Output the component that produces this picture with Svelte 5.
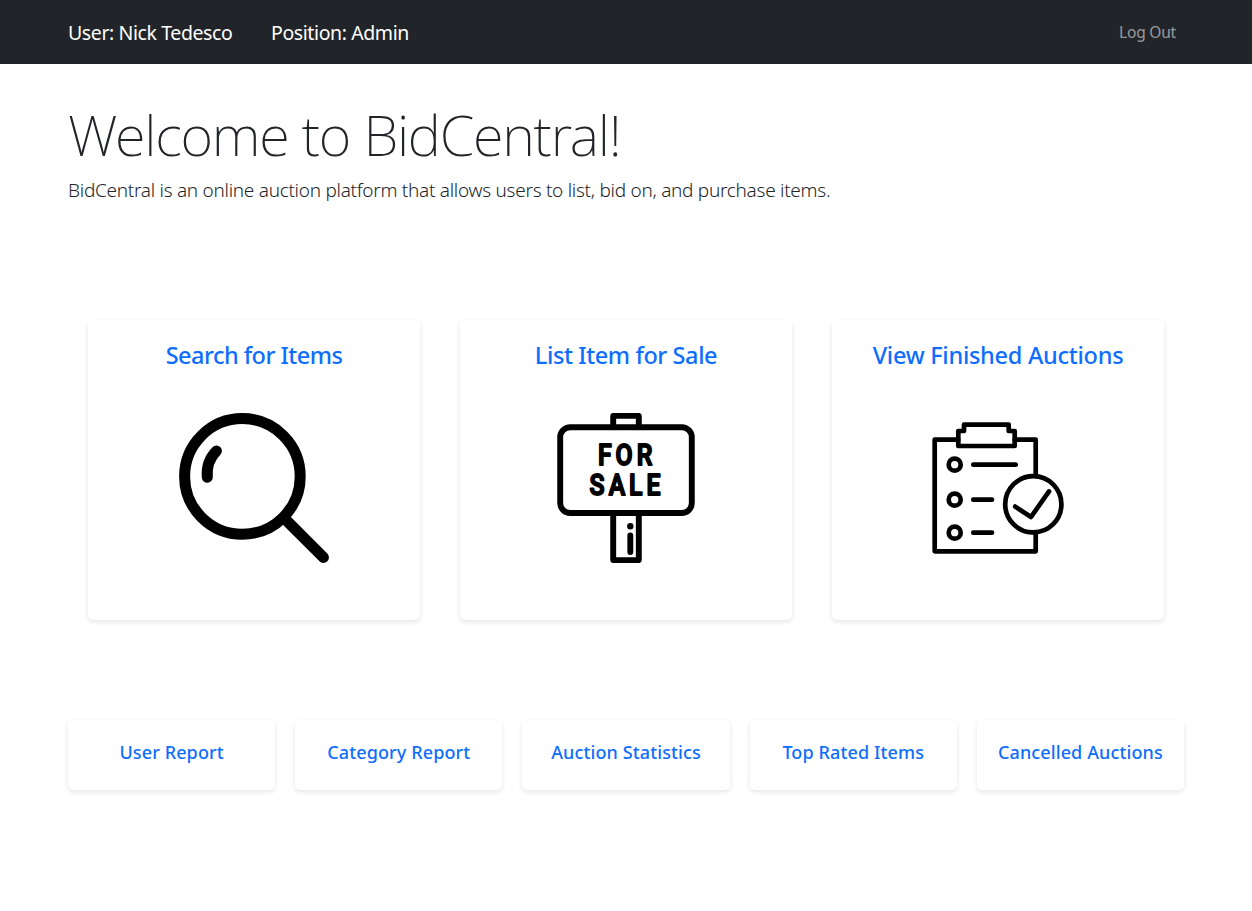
<script>
  const features = [
    { title: 'Search for Items', icon: 'search' },
    { title: 'List Item for Sale', icon: 'sale' },
    { title: 'View Finished Auctions', icon: 'finished' },
  ];
  const reports = ['User Report', 'Category Report', 'Auction Statistics', 'Top Rated Items', 'Cancelled Auctions'];
</script>

<nav>
  <span class="brand user">User: Nick Tedesco</span>
  <span class="brand position">Position: Admin</span>
  <a class="logout" href="#logout">Log Out</a>
</nav>

<main>
  <h1>Welcome to BidCentral!</h1>
  <p class="lead">BidCentral is an online auction platform that allows users to list, bid on, and purchase items.</p>

  <section class="features">
    {#each features as f}
      <a class="card {f.icon}" href="#{f.icon}">
        <h2>{f.title}</h2>
        <svg viewBox="0 0 150 150" width="150" height="150" fill="none" stroke="#000" stroke-linecap="round" stroke-linejoin="round">
          {#if f.icon === 'search'}
            <g stroke-width="11">
              <circle cx="63.4" cy="63.4" r="57.8" />
              <path d="M106 106L144.4 144.4" />
              <path d="M28.3 64.3C27.4 54 30.5 45 37.4 38" />
            </g>
          {:else if f.icon === 'sale'}
            <g stroke-width="5.9">
              <rect x="9.2" y="14.2" width="131.6" height="85.8" rx="10" />
              <path d="M62.2 14V2.9H87.8V14M62.2 100V147.1H87.8V100M79.3 122.4V139" />
            </g>
            <circle cx="79.3" cy="113.3" r="3.2" fill="#000" stroke="none" />
            <g class="sign" transform="scale(.86 1)">
              <text x="54.6" y="51.6">FOR</text>
              <text x="44.9" y="82.1">SALE</text>
            </g>
          {:else}
            <g stroke-width="4.7">
              <path d="M35.3 26.7H11.7V138.3H112.7V119.6M91.7 26.7H112.7V63" />
              <path d="M35.3 33V18H41V11.7H85.7V18H91.7V33Z" />
              <circle cx="31.7" cy="51.7" r="6" />
              <circle cx="31.7" cy="86.7" r="6" />
              <circle cx="31.7" cy="119.7" r="6" />
              <path d="M50.3 51.7H92.7M50.3 86.7H69M50.3 119.7H69" />
              <circle cx="110.3" cy="91.3" r="28.1" />
              <path d="M92.2 93.6L108 104L126 78.4" />
            </g>
          {/if}
        </svg>
      </a>
    {/each}
  </section>

  <section class="reports">
    {#each reports as title, i}
      <a class="card small" href="#report-{i}">{title}</a>
    {/each}
  </section>
</main>

<style>
  :global(body) {
    margin: 0;
    background: #fff;
    color: #212529;
    font-family: "Noto Sans", "Open Sans", sans-serif;
  }
  nav {
    box-sizing: border-box;
    height: 64px;
    padding: 2px 76px 0 68px;
    display: flex;
    align-items: center;
    background: #212529;
    line-height: 30px;
  }
  .brand { color: #fff; font-size: 19.5px; white-space: nowrap; letter-spacing: -0.4px; }
  .user { width: 203px; }
  .logout { margin: -2px 0 0 auto; color: rgba(255, 255, 255, 0.55); font-size: 15.5px; text-decoration: none; letter-spacing: -0.2px; }
  main { padding: 37px 68px 121px; }
  h1 {
    margin: 0;
    font-size: 56px;
    line-height: 67px;
    font-weight: 200;
    letter-spacing: -1.25px;
    white-space: nowrap;
  }
  .lead {
    margin: 7px 0 0;
    font-size: 19px;
    line-height: 30px;
    font-weight: 300;
    letter-spacing: -0.28px;
    white-space: nowrap;
  }
  .features { display: grid; grid-template-columns: repeat(3, 332px); gap: 40px; padding: 115px 20px 0; }
  .card {
    box-sizing: border-box;
    display: flex;
    flex-direction: column;
    align-items: center;
    height: 300px;
    border-radius: 5px;
    background: #fff;
    box-shadow: 0 2px 5px rgba(0, 0, 0, 0.1);
    color: #0d6efd;
    text-decoration: none;
    white-space: nowrap;
  }
  .card h2 { margin: 19px 0 0; font-size: 23.5px; line-height: 32px; font-weight: 500; letter-spacing: -0.4px; }
  .card.search h2 { letter-spacing: -0.52px; }
  .card.finished h2 { letter-spacing: -0.27px; }
  .card svg { margin-top: 42px; }
  .sign { font-family: Roboto, sans-serif; font-weight: 500; font-size: 28.8px; letter-spacing: 4.7px; fill: #000; stroke-width: 1.9; }
  .reports { display: grid; grid-template-columns: repeat(5, 1fr); gap: 20px; padding-top: 100px; }
  .card.small { height: 70px; padding-top: 19px; font-size: 18px; line-height: 26px; font-weight: 500; letter-spacing: 0.12px; }
</style>
